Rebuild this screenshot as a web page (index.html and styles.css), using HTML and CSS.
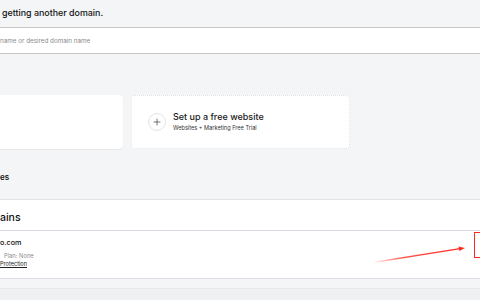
FILE: index.html
```html
<!DOCTYPE html>
<html>
<head>
    <link rel="stylesheet" href="styles.css">
</head>
<body>
    <div class="page">
        <h2 class="title">getting another domain.</h2>
        <div class="search">
            <input type="text" class="search-input" placeholder="name or desired domain name">
        </div>

        <div class="cards">
            <div class="card card-solid"></div>
            <div class="card card-dashed">
                <span class="plus-circle">
                    <svg class="plus-icon" viewBox="0 0 12 12" fill="none" stroke="currentColor">
                        <path d="M6 1.5v9M1.5 6h9" stroke-width="1" stroke-linecap="round"/>
                    </svg>
                </span>
                <div class="card-text">
                    <div class="card-title">Set up a free website</div>
                    <div class="card-sub">Websites + Marketing Free Trial</div>
                </div>
            </div>
        </div>

        <div class="label">es</div>

        <div class="panel">
            <div class="panel-header">ains</div>
            <div class="domain-row">
                <div class="domain-name">o.com</div>
                <div class="domain-meta">Plan: None</div>
                <a class="domain-link" href="#">Protection</a>
            </div>
        </div>

        <div class="panel-next"></div>
    </div>

    <!-- annotation overlay -->
    <svg class="arrow" viewBox="0 0 100 20" width="100" height="20">
        <defs>
            <linearGradient id="fade" x1="0" y1="0" x2="1" y2="0">
                <stop offset="0" stop-color="#ff2a1f" stop-opacity="0"/>
                <stop offset="0.35" stop-color="#ff2a1f" stop-opacity="0.8"/>
                <stop offset="1" stop-color="#ff2a1f"/>
            </linearGradient>
        </defs>
        <path d="M1 16.5 L88 2.6" stroke="url(#fade)" stroke-width="1.3" fill="none"/>
        <path d="M93 2 L86.5 0.6 L87.4 5 Z" fill="#ff2a1f"/>
    </svg>
    <div class="mark"></div>
</body>
</html>
```

FILE: styles.css
```css
body {
    margin: 0;
    background: #f4f5f7;
    font-family: 'Inter', 'Noto Sans', sans-serif;
    color: #111;
    position: relative;
    width: 480px;
    height: 300px;
    overflow: hidden;
}

.title {
    margin: 0;
    padding: 6px 0 0 2px;
    font-size: 8.9px;
    line-height: 14px;
    font-weight: 500;
}

.search {
    margin-top: 7px;
    background: #fff;
    border-top: 1px solid #c6c6c6;
    border-bottom: 1px solid #c6c6c6;
}

.search-input {
    display: block;
    width: 100%;
    height: 25px;
    border: none;
    padding: 0;
    background: transparent;
    font-family: 'Inter', 'Noto Sans', sans-serif;
    font-size: 6.3px;
    outline: none;
}

.search-input::placeholder {
    color: #8a8a8a;
}

.cards {
    display: flex;
    gap: 8px;
    margin-top: 41px;
    margin-left: -10px;
}

.card {
    height: 54px;
    background: #fff;
    border-radius: 4px;
    box-sizing: border-box;
}

.card-solid {
    width: 133px;
    box-shadow: 0 1px 2px rgba(0, 0, 0, 0.06);
}

.card-dashed {
    width: 219px;
    border: 1px dotted #e2e3e6;
    display: flex;
    align-items: center;
    gap: 7px;
    padding-left: 16px;
}

.plus-circle {
    width: 18px;
    height: 18px;
    border: 1px solid #e3e3e3;
    border-radius: 50%;
    display: flex;
    align-items: center;
    justify-content: center;
    color: #333;
    box-sizing: border-box;
}

.plus-icon {
    width: 8px;
    height: 8px;
}

.card-title {
    font-size: 9px;
    font-weight: 500;
    line-height: 12px;
    color: #1a1a1a;
}

.card-sub {
    font-size: 5.6px;
    line-height: 9px;
    margin-top: 1px;
    color: #333;
}

.label {
    margin-top: 22px;
    font-size: 8px;
    line-height: 12px;
    font-weight: 600;
}

.panel {
    margin-top: 16px;
    background: #fff;
    border-top: 1px solid #e0e4e8;
    border-bottom: 1px solid #dde1e6;
}

.panel-header {
    padding: 11px 0 5px;
    font-size: 10.5px;
    line-height: 14px;
    font-weight: 500;
    border-bottom: 1px solid #d7dce2;
}

.domain-row {
    padding: 7px 0 10px;
}

.domain-name {
    font-size: 7.2px;
    line-height: 10px;
    font-weight: 500;
}

.domain-meta {
    margin-top: 4px;
    padding-left: 4px;
    font-size: 5.8px;
    line-height: 8px;
    color: #8c8c8c;
}

.domain-link {
    display: block;
    font-size: 5.6px;
    line-height: 8px;
    color: #222;
    text-decoration: underline;
}

.panel-next {
    margin-top: 9px;
    height: 20px;
    background: #eff0f2;
    border-top: 1px solid #e6e8eb;
}

.arrow {
    position: absolute;
    left: 372px;
    top: 246px;
}

.mark {
    position: absolute;
    left: 474px;
    top: 232px;
    width: 24px;
    height: 24px;
    border: 1.5px solid #ff2a1f;
}
```
